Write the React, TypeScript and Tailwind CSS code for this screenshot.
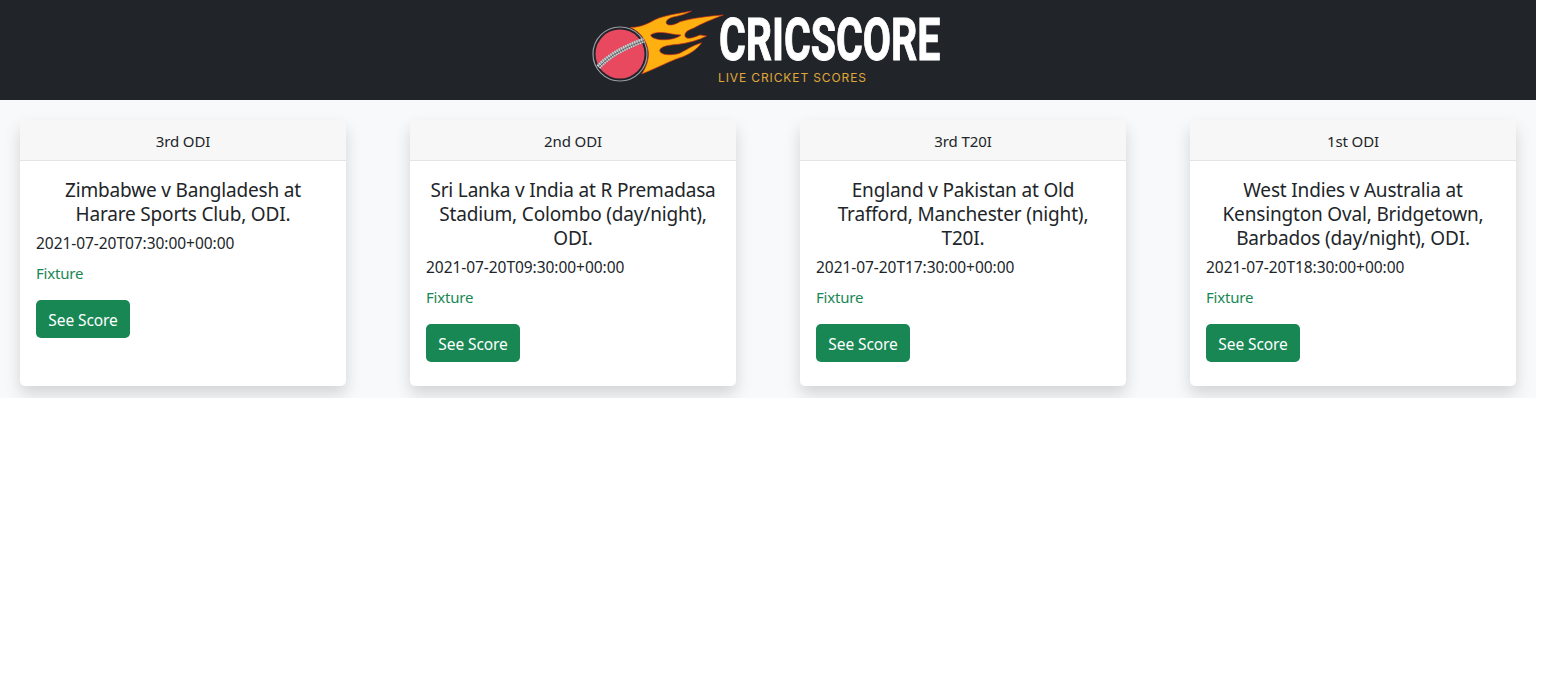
const matches = [
  {
    id: 1,
    series: "3rd ODI",
    title: "Zimbabwe v Bangladesh at Harare Sports Club, ODI.",
    date: "2021-07-20T07:30:00+00:00",
  },
  {
    id: 2,
    series: "2nd ODI",
    title: "Sri Lanka v India at R Premadasa Stadium, Colombo (day/night), ODI.",
    date: "2021-07-20T09:30:00+00:00",
  },
  {
    id: 3,
    series: "3rd T20I",
    title: "England v Pakistan at Old Trafford, Manchester (night), T20I.",
    date: "2021-07-20T17:30:00+00:00",
  },
  {
    id: 4,
    series: "1st ODI",
    title: "West Indies v Australia at Kensington Oval, Bridgetown, Barbados (day/night), ODI.",
    date: "2021-07-20T18:30:00+00:00",
  },
];

function Logo() {
  return (
    <svg width="356" height="100" viewBox="590 0 356 100" fill="none">
      {/* flames, drawn at 3x */}
      <g transform="translate(585 5) scale(0.3333)">
        <path
          d="M135 67C165 68 190 55 210 44C240 30 285 25 320 18C300 28 285 32 265 36C250 40 240 48 245 57C252 63 268 60 285 50C320 40 370 33 415 30C385 42 350 55 325 70C307 76 296 84 301 96C309 104 325 98 345 90L365 93C340 106 310 114 280 118C250 120 228 124 224 136C226 150 250 152 280 146C300 138 320 122 350 113C335 135 310 150 285 158C250 170 225 185 170 207C185 185 192 160 190 140C185 105 165 80 135 67Z"
          fill="#fdb00f"
          stroke="#c8281c"
          strokeWidth="2"
        />
        <path
          d="M197 90C207 82 225 80 250 85C265 88 280 90 288 90C278 100 250 106 227 104C210 102 199 98 197 90Z"
          fill="#21252b"
          stroke="#c8281c"
          strokeWidth="2"
        />
      </g>
      {/* ball */}
      <circle cx="620" cy="54" r="27" fill="#21252b" stroke="#9a9ea3" strokeWidth="1.2" />
      <circle cx="620" cy="54" r="24.5" fill="#e8495f" />
      <path d="M598.5 67C610 54 628 46 644 40" stroke="#85898c" strokeWidth="5" />
      <path d="M598.5 67C610 54 628 46 644 40" stroke="#d0d2d3" strokeWidth="5" strokeDasharray="1.4 1" />
      <path d="M599 67C610 54.5 628 46.5 644 40.5" stroke="#4b4f52" strokeWidth="0.8" />
      <text
        transform="translate(719 60) scale(0.683 1)"
        fill="#ffffff"
        stroke="#ffffff"
        strokeWidth="1"
        fontFamily="Roboto, sans-serif"
        fontWeight="700"
        fontSize="60"
      >
        CRICSCORE
      </text>
      <text
        x="718"
        y="81.5"
        textLength="148"
        lengthAdjust="spacing"
        fill="#e0a83a"
        fontFamily="Inter, sans-serif"
        fontWeight="400"
        fontSize="12"
      >
        LIVE CRICKET SCORES
      </text>
    </svg>
  );
}

export default function App() {
  return (
    <div className="w-[1536px] bg-white font-['Noto_Sans',sans-serif] text-[#212529]">
      <header className="flex h-[100px] justify-center bg-[#212529]">
        <Logo />
      </header>
      <section className="grid grid-cols-4 gap-16 bg-[#f8f9fa] px-5 pt-5 pb-3">
        {matches.map((match) => (
          <div key={match.id} className="h-[266px] overflow-hidden rounded-[5px] bg-white shadow-[0_8px_16px_rgba(0,0,0,0.15)]">
            <div className="border-b border-[#e4e4e4] bg-[#f7f7f7] pt-[9px] pb-[7px] text-center text-[15px] leading-6 tracking-[-0.1px]">
              {match.series}
            </div>
            <div className="px-4 pt-[17px]">
              <h5 className="mb-[5px] text-center text-[19px] leading-6 tracking-[-0.17px]">{match.title}</h5>
              <p className="mb-[6px] text-[15.5px] leading-6 tracking-[-0.05px]">{match.date}</p>
              <p className="mb-[15px] text-[15px] leading-6 tracking-[-0.2px] text-[#198754]">Fixture</p>
              <button className="h-[38px] w-[94px] rounded-[5px] bg-[#198754] pt-[3px] text-[15.5px] tracking-[-0.1px] text-white">
                See Score
              </button>
            </div>
          </div>
        ))}
      </section>
    </div>
  );
}
